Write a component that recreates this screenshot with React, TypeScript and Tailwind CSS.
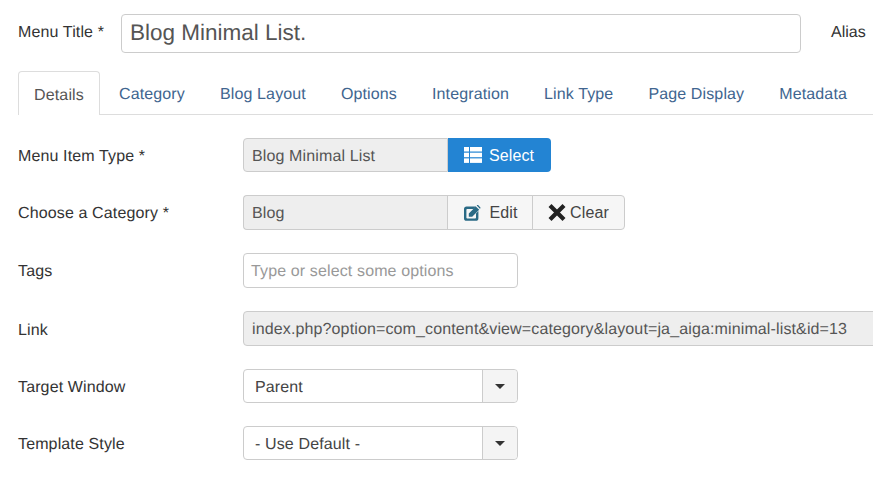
const tabs = ["Category", "Blog Layout", "Options", "Integration", "Link Type", "Page Display", "Metadata"];

const ListIcon = () => (
  <svg width="18" height="16" viewBox="0 0 18 16" fill="#fff">
    <rect x="0" y="0" width="5" height="4.5" />
    <rect x="6" y="0" width="12" height="4.5" />
    <rect x="0" y="5.7" width="5" height="4.5" />
    <rect x="6" y="5.7" width="12" height="4.5" />
    <rect x="0" y="11.4" width="5" height="4.5" />
    <rect x="6" y="11.4" width="12" height="4.5" />
  </svg>
);

const EditIcon = () => (
  <svg width="17" height="16" viewBox="0 0 17 16">
    <path d="M2.6 1.5h9.4L9.6 3.9H3.2a.8.8 0 0 0-.8.8v8c0 .4.4.8.8.8h8c.4 0 .8-.4.8-.8V8.4l2.4-2.4v7.2a2.6 2.6 0 0 1-2.6 2.6H2.6A2.6 2.6 0 0 1 0 13.2V4.1a2.6 2.6 0 0 1 2.6-2.6z" fill="#2a6a85" />
    <path d="M4.8 8.4 11.8 1.4l3.4 3.4-7 7H4.8zM12.7.6l.5-.5c.3-.2.6-.2.9 0l2.3 2.3c.2.3.2.6 0 .9l-.5.5z" fill="#2a6a85" />
  </svg>
);

const CloseIcon = () => (
  <svg width="18" height="17" viewBox="0 0 18 17" fill="none" stroke="#222" strokeWidth="4.2">
    <path d="M2 1.5 16 15.5M16 1.5 2 15.5" />
  </svg>
);

const Row = ({ label, children, low }: { label: string; children: React.ReactNode; low?: boolean }) => (
  <div className="flex items-center">
    <label className={low ? "w-[225px] shrink-0 pt-[4px] text-[#333]" : "w-[225px] shrink-0 pt-[2px] text-[#333]"}>{label}</label>
    {children}
  </div>
);

const SelectBox = ({ value }: { value: string }) => (
  <div className="flex h-[34px] w-[275px] rounded border border-[#ccc] bg-white">
    <span className="flex-1 pl-[11px] leading-[36px] text-[#444]">{value}</span>
    <span className="flex w-[35px] items-center justify-center rounded-r border-l border-[#ccc] bg-[#f4f4f4]">
      <span className="h-0 w-0 border-x-[5px] border-t-[5px] border-x-transparent border-t-[#333]" />
    </span>
  </div>
);

export default function App() {
  return (
    <div className="h-[496px] w-[873px] overflow-hidden bg-white pl-[18px] pt-[14px] text-[16px] tracking-[0.13px] font-['Liberation_Sans',Arial,sans-serif] [text-rendering:geometricPrecision]">
      {/* title */}
      <div className="flex items-center whitespace-nowrap">
        <label className="w-[103px] shrink-0 pb-[1px] text-[#333]">Menu Title *</label>
        <div className="h-[39px] w-[680px] shrink-0 rounded border border-[#ccc] pl-[8px] text-[22.5px] leading-[35px] tracking-normal text-[#555]">
          Blog Minimal List.
        </div>
        <label className="ml-[30px] pb-[1px] tracking-normal text-[#333]">Alias</label>
      </div>

      {/* tabs */}
      <div className="mt-[18px] flex h-[44px] border-b border-[#ddd] whitespace-nowrap">
        <div className="h-[44px] w-[82px] rounded-t border border-b-0 border-[#ddd] bg-white text-center leading-[47px] text-[#555]">
          Details
        </div>
        <div className="ml-[19px] flex gap-[35px]">
          {tabs.map((tab) => (
            <span key={tab} className="leading-[47px] text-[#40658f]">
              {tab}
            </span>
          ))}
        </div>
      </div>

      {/* form */}
      <div className="mt-[23px] flex flex-col gap-[23px] whitespace-nowrap">
        <Row label="Menu Item Type *" low>
          <div className="flex h-[34px]">
            <div className="w-[205px] rounded-l border border-[#ccc] bg-[#eee] pl-[8px] leading-[35px] text-[#555]">Blog Minimal List</div>
            <button className="flex w-[103px] items-center justify-center gap-[7px] rounded-r bg-[#2384d3] pr-[1px] text-white">
              <ListIcon />
              <span className="pt-[2px]">Select</span>
            </button>
          </div>
        </Row>
        <Row label="Choose a Category *">
          <div className="flex h-[35px]">
            <div className="w-[204px] rounded-l border border-r-0 border-[#ccc] bg-[#eee] pl-[8px] leading-[36px] text-[#555]">Blog</div>
            <button className="flex w-[86px] items-center justify-center gap-[8px] border border-[#ccc] bg-[#f6f6f6] pl-[2px] text-[#444]">
              <EditIcon />
              Edit
            </button>
            <button className="ml-[-1px] flex w-[93px] items-center justify-center gap-[4px] rounded-r border border-[#ccc] bg-[#f6f6f6] text-[#444]">
              <CloseIcon />
              Clear
            </button>
          </div>
        </Row>
        <Row label="Tags">
          <div className="h-[35px] w-[275px] rounded border border-[#ccc] pl-[7px] leading-[35px] text-[#999]">Type or select some options</div>
        </Row>
        <Row label="Link" low>
          <div className="h-[35px] w-[640px] shrink-0 rounded-l border border-[#ccc] bg-[#eee] pl-[8px] leading-[36px] text-[#555]">
            index.php?option=com_content&amp;view=category&amp;layout=ja_aiga:minimal-list&amp;id=13
          </div>
        </Row>
        <Row label="Target Window" low>
          <SelectBox value="Parent" />
        </Row>
        <Row label="Template Style" low>
          <SelectBox value="- Use Default -" />
        </Row>
      </div>
    </div>
  );
}
